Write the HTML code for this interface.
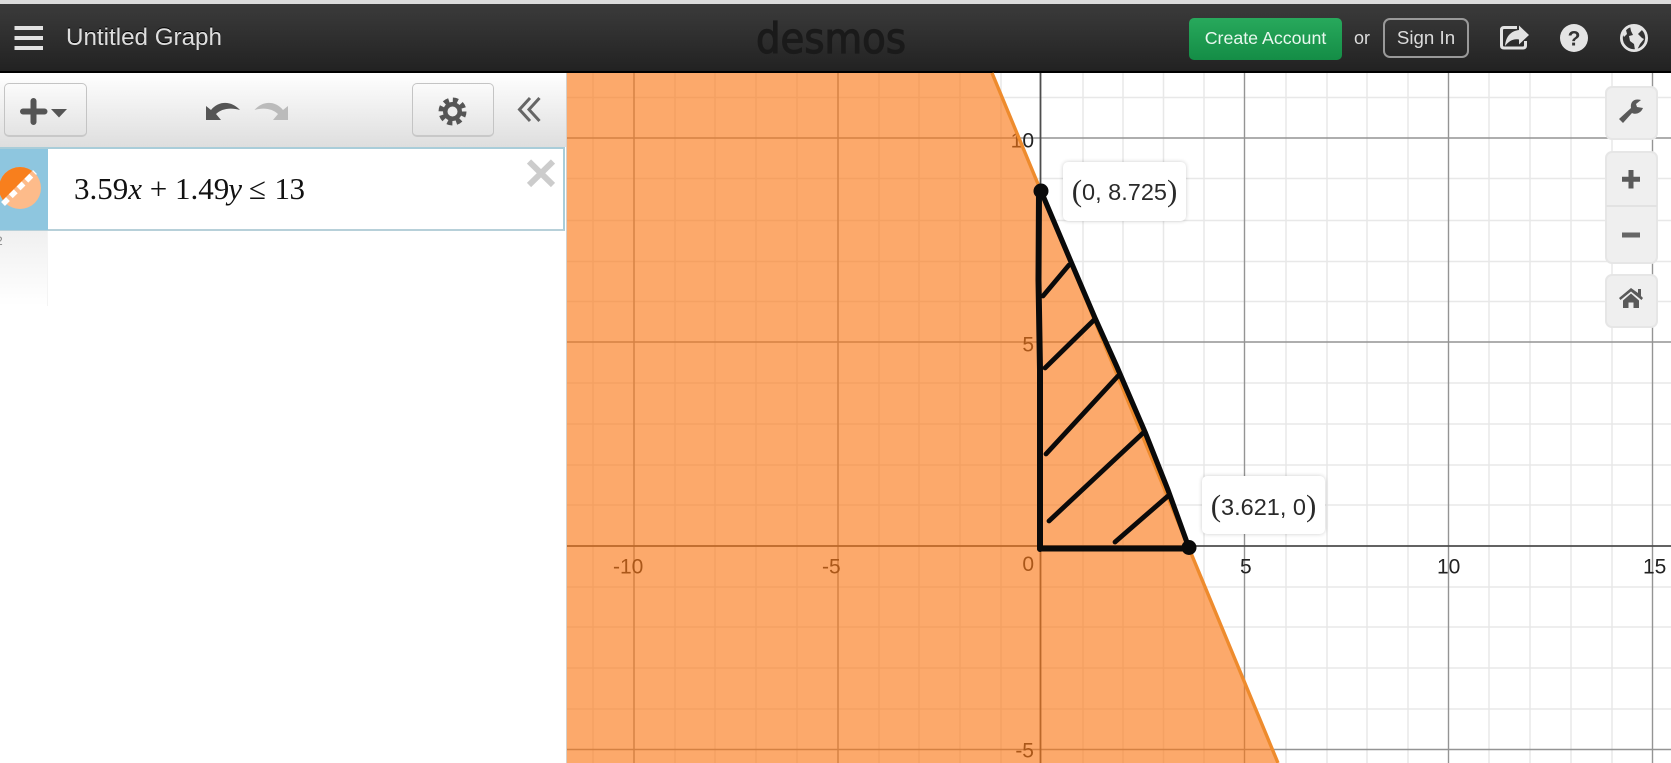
<!DOCTYPE html>
<html><head><meta charset="utf-8"><title>Untitled Graph - Desmos</title>
<style>
html,body{margin:0;padding:0;width:1671px;height:763px;overflow:hidden;background:#fff;font-family:"Liberation Sans",sans-serif}
.a{position:absolute}
#top{left:0;top:0;width:1671px;height:4px;background:#dcdcdc}
#hd{left:0;top:4px;width:1671px;height:67px;background:linear-gradient(#3b3b3b,#222);border-bottom:2px solid #000}
#title{left:66px;top:24px;font-size:24.2px;line-height:28px;color:#dedede;text-shadow:0 -1px 0 #000;white-space:nowrap}
#create{left:1189px;top:18px;width:153px;height:42px;border-radius:5px;background:linear-gradient(#28a95c,#148d46);color:#e9f8ef;font-size:17.8px;line-height:41px;text-align:center;white-space:nowrap}
#or{left:1354px;top:26px;font-size:18px;line-height:24px;color:#ddd}
#sign{left:1383px;top:18px;width:82px;height:36px;border:2px solid #999;border-radius:7px;color:#dcdcdc;font-size:18.7px;line-height:36px;text-align:center;white-space:nowrap}
#side{left:0;top:73px;width:566px;height:690px;background:#fff;border-right:1px solid #d5d0ca}
#tb{left:0;top:73px;width:566px;height:74px;background:linear-gradient(#fff,#dedede)}
.btn{border:1px solid #c4c4c4;border-bottom:2px solid #c8c8c8;border-radius:5px;background:linear-gradient(#fbfbfb,#e3e3e3);box-sizing:border-box}
#row{left:0;top:147px;width:565px;height:84px;box-sizing:border-box;background:#fff;border:2px solid #a9cdd9;border-left:0;border-bottom-color:#b7d0d9}
#tab{left:0;top:149px;width:48px;height:81px;background:#8ec6df}
#tab2{left:0;top:231px;width:47px;height:75px;background:linear-gradient(#f0f0f0,#fff);border-right:1px solid #f4f4f4}
#num{left:-4px;top:234px;font-size:12px;color:#888}
#math{left:74px;top:170px;font-family:"Liberation Serif",serif;font-size:31px;line-height:38px;color:#111;white-space:nowrap}
#math i{margin:0}
.tool{background:#efefef;border:2px solid #e6e6e6;border-radius:7px;box-sizing:border-box}
.lbl{background:#fff;border-radius:5px;box-shadow:0 0 4px rgba(0,0,0,.2);box-sizing:border-box;color:#2a2a2a;font-size:23.5px;line-height:58px;text-align:center;white-space:nowrap}
.lbl span{font-size:31px;font-weight:300;vertical-align:-1px;font-family:"Liberation Serif",serif}
svg{position:absolute;left:0;top:0}
</style></head><body>
<div class="a" id="top"></div>
<div class="a" id="hd"></div>

<svg width="1671" height="763" viewBox="0 0 1671 763">
<g>
<g stroke="#e8e8e8" stroke-width="1.5">
<path d="M593 73V763M634 73V763M675 73V763M715 73V763M756 73V763M797 73V763M838 73V763M879 73V763M919 73V763M960 73V763M1001 73V763M1083 73V763M1123 73V763M1163.5 73V763M1204 73V763M1286 73V763M1327 73V763M1367 73V763M1408 73V763M1489 73V763M1530 73V763M1571 73V763M1612 73V763"/>
<path d="M567 97.5H1671M567 178.5H1671M567 220.5H1671M567 261.5H1671M567 301.5H1671M567 383H1671M567 424H1671M567 465H1671M567 505H1671M567 587H1671M567 627H1671M567 668H1671M567 709H1671"/>
</g>
<g stroke="#949494" stroke-width="1.4">
<path d="M634 73V763M838 73V763M1244.5 73V763M1448.5 73V763M1652.5 73V763"/>
<path d="M567 138H1671M567 342H1671M567 749.5H1671"/>
</g>
<g stroke="#4d4d4d" stroke-width="1.8"><path d="M1040.5 73V763M567 546H1671"/></g>
</g>
<g font-family="Liberation Sans, sans-serif" font-size="21" fill="#222">
<text x="1034" y="147.5" text-anchor="end">10</text>
<text x="1034" y="351.5" text-anchor="end">5</text>
<text x="1034" y="571" text-anchor="end">0</text>
<text x="1034" y="757.5" text-anchor="end">-5</text>
<text x="613" y="573.5">-10</text>
<text x="822" y="573.5">-5</text>
<text x="1240" y="573.5">5</text>
<text x="1437" y="573.5">10</text>
<text x="1643" y="573.5">15</text>
</g>
<polygon points="567,73 992,73 1278,763 567,763" fill="rgb(250,118,20)" fill-opacity=".63"/>
<path d="M992 73L1278 763" stroke="#ee8b2d" stroke-width="3.4" fill="none"/>
</svg>

<div class="a" id="side"></div>
<div class="a" id="tb"></div>
<div class="a btn" style="left:4px;top:83px;width:83px;height:54px"></div>
<div class="a btn" style="left:412px;top:83px;width:82px;height:54px"></div>
<div class="a" id="row"></div>
<div class="a" id="tab"></div>
<div class="a" id="tab2"></div>
<div class="a" id="num">2</div>
<div class="a" id="math">3.59<i>x</i> + <span style="margin-left:0">1.49</span><i style="margin-left:-1px">y</i> <span style="margin-left:-1px">≤</span> <span style="margin-left:1px;letter-spacing:-.5px">13</span></div>

<div class="a" id="title">Untitled Graph</div>
<div class="a" id="create">Create Account</div>
<div class="a" id="or">or</div>
<div class="a" id="sign">Sign In</div>

<div class="a tool" style="left:1605px;top:86px;width:53px;height:54px"></div>
<div class="a tool" style="left:1605px;top:151px;width:53px;height:113px"></div>
<div class="a" style="left:1606px;top:205px;width:51px;height:2px;background:#e2e2e2"></div>
<div class="a tool" style="left:1605px;top:274px;width:53px;height:54px"></div>

<div class="a lbl" style="left:1063px;top:162px;width:123px;height:59px"><span>(</span>0, 8.725<span>)</span></div>
<div class="a lbl" style="left:1202px;top:476px;width:123px;height:58px;line-height:60px"><span>(</span>3.621, 0<span>)</span></div>

<svg width="1671" height="763" viewBox="0 0 1671 763">
<g fill="none" stroke="#0a0a0a" stroke-linecap="round" stroke-linejoin="round">
<path d="M1039 192L1038.5 280L1040 370L1040 460L1040 549" stroke-width="6"/>
<path d="M1040 548.5H1189" stroke-width="6"/>
<path d="M1041 191L1071.5 263L1095 318L1117 367L1145 432L1168 490L1189 548" stroke-width="5.2"/>
<path d="M1069 265L1043 296M1094 320L1045 368M1118 376L1046 454M1143 433L1049 521M1168 496L1115 542" stroke-width="4.8"/>
</g>
<circle cx="1041" cy="191" r="7.5" fill="#0a0a0a"/>
<circle cx="1189" cy="547.5" r="7.5" fill="#0a0a0a"/>

<path d="M14.5 26h28.5v4h-28.5zM14.5 36h28.5v4h-28.5zM14.5 46h28.5v4h-28.5z" fill="#e2e2e2"/>

<text x="756" y="53" font-family="DejaVu Sans, sans-serif" font-size="42" fill="#1a1a1a" stroke="#1a1a1a" stroke-width="1.2" textLength="150" lengthAdjust="spacingAndGlyphs">desmos</text>

<g>
<path d="M1517 27.5H1504Q1501.5 27.5 1501.5 30V45.5Q1501.5 48 1504 48H1523Q1525.5 48 1525.5 45.5V41" fill="none" stroke="#e2e2e2" stroke-width="3"/>
<path d="M1505 46C1506 36 1511 31 1519 30V25.5L1529 35L1519 44.5V39.5C1513 38.5 1509 41 1505 46Z" fill="#e2e2e2"/>
</g>
<circle cx="1574" cy="38" r="14" fill="#e4e4e4"/>
<text x="1574" y="45.5" font-family="Liberation Sans, sans-serif" font-weight="bold" font-size="21" text-anchor="middle" fill="#333">?</text>
<circle cx="1634" cy="38" r="12.6" fill="#333" stroke="#e4e4e4" stroke-width="2.8"/>
<path d="M1630 26L1640 26L1642 30L1638 34L1642 38L1644 39L1640 44L1637 50L1635 50L1634 44L1630 41L1629 36L1633 35L1631 31Z" fill="#e4e4e4"/>
<path d="M1622 33L1626 30L1627 34L1624 37Z" fill="#e4e4e4"/>

<path d="M23 111.5H44.5M33.5 101V122" stroke="#555" stroke-width="6" stroke-linecap="round"/>
<path d="M51 109H67L59 117.5Z" fill="#555"/>
<path d="M206 106V120H221L216 114C221 109 230 107 240 110C232 101 219 100 211 110Z" fill="#555"/>
<path d="M288 106V120H273L278 114C273 109 264 107 254.5 110C262 101 275 100 283 110Z" fill="#bbb"/>
<circle cx="452.5" cy="111.5" r="9.5" fill="#555"/>
<circle cx="452.5" cy="111.5" r="11.5" fill="none" stroke="#555" stroke-width="5" stroke-dasharray="5.03 4"/>
<circle cx="452.5" cy="111.5" r="5" fill="#ececec"/>
<path d="M530 98L519.5 109.5L530 121M539.5 98L529 109.5L539.5 121" fill="none" stroke="#666" stroke-width="3"/>
<path d="M529 161.5L553 185M553 161.5L529 185" stroke="#ccc" stroke-width="6"/>
<clipPath id="c"><circle cx="20" cy="188" r="21"/></clipPath>
<circle cx="20" cy="188" r="21" fill="#fdbb8a"/>
<polygon points="-5,208 38,165 20,150 -5,160" fill="#f87f1d" clip-path="url(#c)"/>
<path d="M3 204L35 172" stroke="#fff" stroke-width="5.5" stroke-dasharray="7 4"/>

<path d="M1619 119L1631 108C1630 102 1634 98 1641 100L1636 104L1637 107L1643 108C1641 113 1636 115 1632 113L1623 123Z" fill="#5a5a5a"/>
<path d="M1622 176.8h18v5h-18zM1628.5 170h5v18.5h-5z" fill="#5a5a5a"/>
<path d="M1622 232.5h18v5h-18z" fill="#666"/>
<path d="M1619 298L1631 288L1638 293V289H1641V296L1643 298L1641.5 300L1631 291.5L1620.5 300ZM1623 300.5L1631 293.5L1639 300.5V308H1633.5V302.5H1628.5V308H1623Z" fill="#5a5a5a"/>
</svg>
</body></html>
